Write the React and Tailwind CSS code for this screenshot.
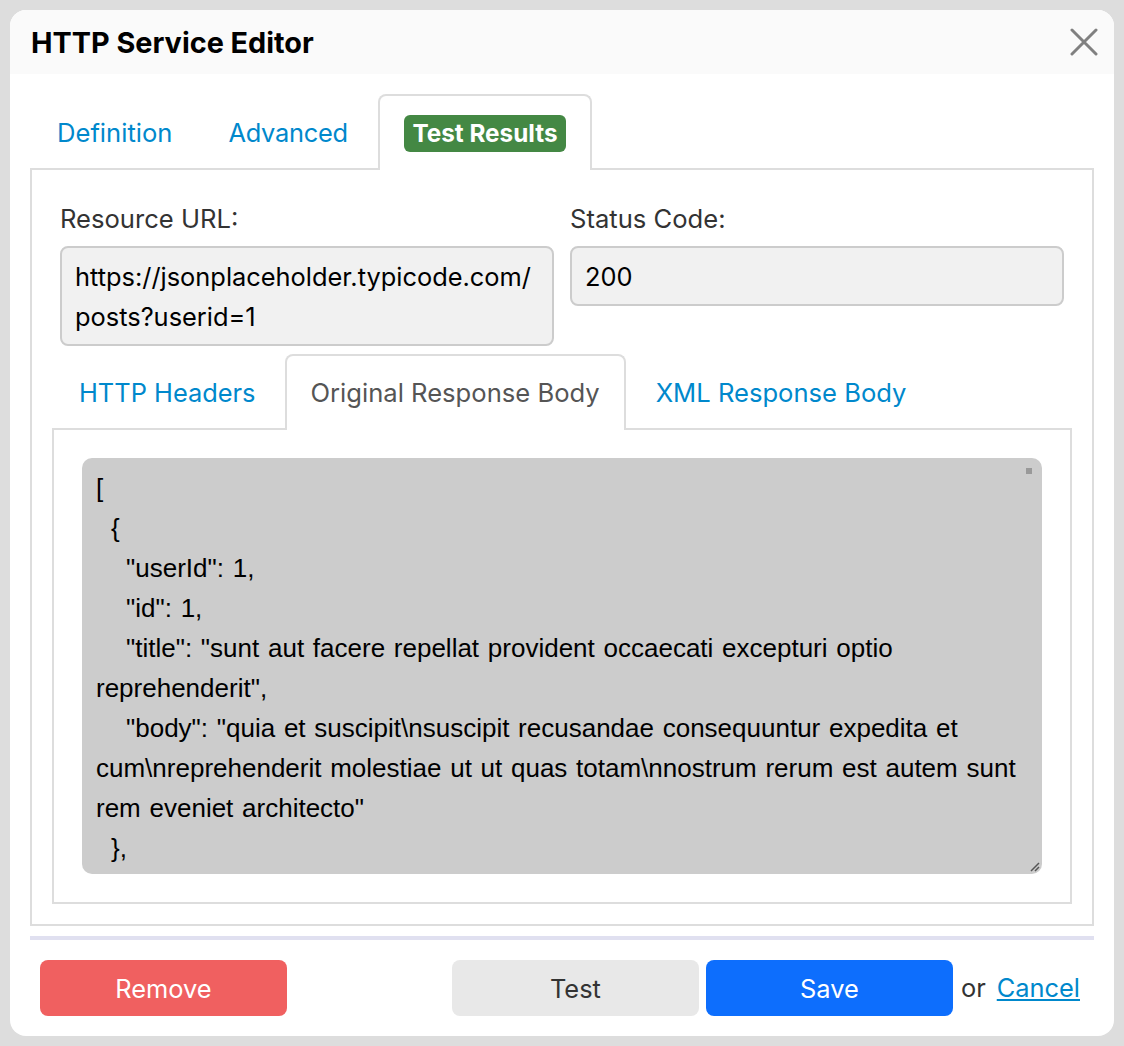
import React from "react";

const responseLines = [
  { text: "[" },
  { text: "{", indent: "indent-[15px]" },
  { text: '"userId": 1,', indent: "indent-[30px]" },
  { text: '"id": 1,', indent: "indent-[30px]" },
  { text: '"title": "sunt aut facere repellat provident occaecati excepturi optio reprehenderit",', indent: "indent-[30px]" },
  { text: '"body": "quia et suscipit\\nsuscipit recusandae consequuntur expedita et cum\\nreprehenderit molestiae ut ut quas totam\\nnostrum rerum est autem sunt rem eveniet architecto"', indent: "indent-[30px]" },
  { text: "},", indent: "indent-[15px]" },
];

const App = () => {
  return (
    <div className="h-[1046px] overflow-hidden bg-[#dddddd] p-[10px] font-['Inter',sans-serif] text-[25.4px] leading-[40px] text-[#333333]">
      <div className="flex h-[1026px] flex-col overflow-hidden rounded-[16px] bg-white">
        <div className="flex h-[64px] shrink-0 items-center justify-between bg-[#fafafa] pl-[21px] pr-[16px]">
          <h1 className="pt-px text-[28.8px] font-bold text-black">HTTP Service Editor</h1>
          <svg width="28" height="28" viewBox="0 0 28 28" fill="none" stroke="#808080" strokeWidth="3" strokeLinecap="round">
            <path d="M2 2 L26 26 M26 2 L2 26" />
          </svg>
        </div>

        <div className="flex flex-1 flex-col px-[20px]">
          <div className="relative z-10 mt-[20px] flex h-[76px] gap-[4px] pl-px">
            <a className="px-[26px] pt-[19px] text-[25.6px] text-[#0088cc]">Definition</a>
            <a className="px-[26px] pt-[19px] tracking-[-0.25px] text-[#0088cc]">Advanced</a>
            <div className="rounded-t-[8px] border-2 border-b-0 border-[#dddddd] bg-white px-[24px] pt-[19px]">
              <span className="block h-[37px] rounded-[6px] bg-[#448844] px-[8.5px] text-[24.3px] font-bold leading-[37px] text-white">Test Results</span>
            </div>
          </div>

          <div className="-mt-[2px] flex h-[758px] flex-col border-2 border-[#dddddd] px-[20px] pt-[28px]">
            <div className="flex gap-[16px] px-[8px]">
              <div className="w-[494px]">
                <label className="block h-[48px] text-[25.6px] leading-[42px]">Resource URL:</label>
                <div className="h-[100px] break-words rounded-[8px] border-2 border-[#cccccc] bg-[#f1f1f1] px-[13px] py-[9px] text-black">
                  https://jsonplaceholder.typicode.com/ posts?userid=1
                </div>
              </div>
              <div className="w-[494px]">
                <label className="block h-[48px] text-[25.6px] leading-[42px]">Status Code:</label>
                <div className="h-[60px] rounded-[8px] border-2 border-[#cccccc] bg-[#f1f1f1] px-[13px] py-[9px] text-black">200</div>
              </div>
            </div>

            <div className="relative z-10 mt-[8px] flex h-[76px] gap-[3px] pl-px text-[25.6px]">
              <a className="px-[26px] pt-[19px] text-[25.4px] text-[#0088cc]">HTTP Headers</a>
              <div className="rounded-t-[8px] border-2 border-b-0 border-[#dddddd] bg-white px-[24px] pt-[17px] text-[#555555]">Original Response Body</div>
              <a className="ml-[1px] px-[26px] pt-[19px] text-[#0088cc]">XML Response Body</a>
            </div>

            <div className="-mt-[2px] h-[476px] border-2 border-[#dddddd] px-[28px] pt-[28px]">
              <div className="relative h-[416px] overflow-hidden rounded-[10px] bg-[#cccccc] py-[10px] pl-[14px] pr-[20px] font-['Liberation_Sans',sans-serif] text-[26px] text-black [word-spacing:1.5px]">
                {responseLines.map((line, i) => (
                  <div key={i} className={line.indent}>{line.text}</div>
                ))}
                <div className="absolute right-[10px] top-[10px] h-[6px] w-[6px] bg-[#999999]" />
                <svg className="absolute bottom-[2px] right-[2px]" width="10" height="10" viewBox="0 0 10 10" stroke="#555555" strokeWidth="1.5">
                  <path d="M1 9 L9 1 M5 9 L9 5" />
                </svg>
              </div>
            </div>
          </div>

          <div className="mt-[10px] h-[4px] shrink-0 bg-[#e0e0f0]" />

          <div className="mt-[20px] flex items-center justify-between pl-[10px] pr-[14px]">
            <button className="h-[56px] w-[247px] rounded-[8px] bg-[#f06060] pt-px text-white">Remove</button>
            <div className="flex items-center">
              <button className="h-[56px] w-[247px] rounded-[8px] bg-[#e8e8e8] pt-px text-[#333333]">Test</button>
              <button className="ml-[7px] h-[56px] w-[247px] rounded-[8px] bg-[#0d6efd] pt-px text-white">Save</button>
              <span className="ml-[8px]">or</span>
              <a className="ml-[11px] text-[#0088cc] underline">Cancel</a>
            </div>
          </div>
        </div>
      </div>
    </div>
  );
};

export default App;
